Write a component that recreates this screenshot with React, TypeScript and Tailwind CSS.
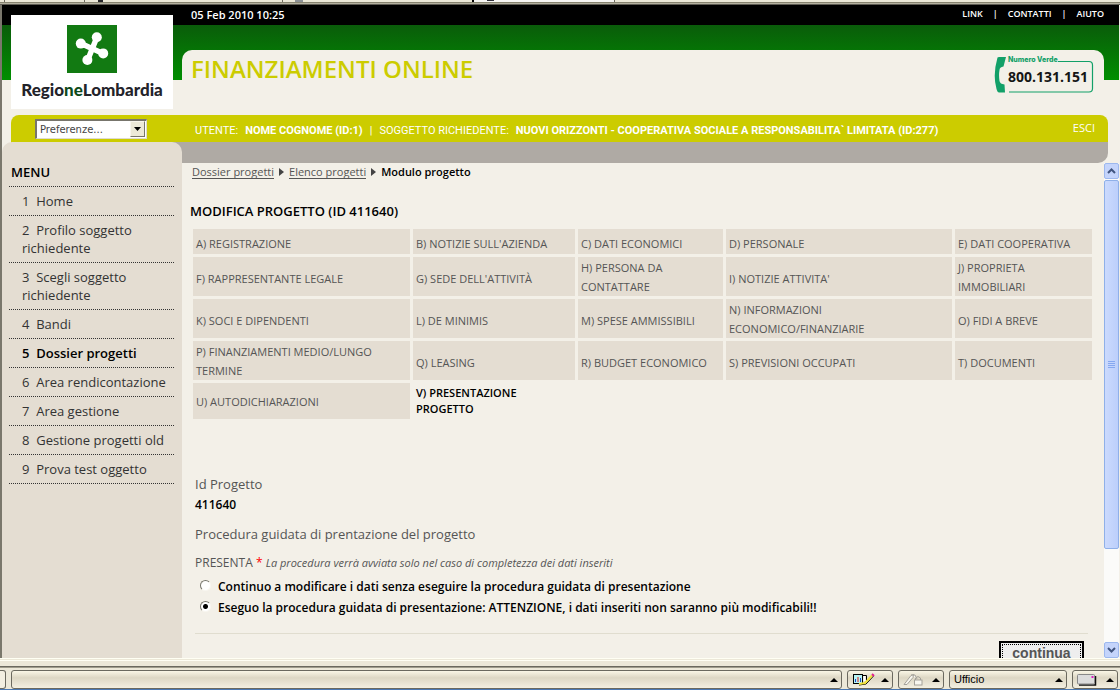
import { useState } from "react";

const menu = [
  "Home",
  "Profilo soggetto richiedente",
  "Scegli soggetto richiedente",
  "Bandi",
  "Dossier progetti",
  "Area rendicontazione",
  "Area gestione",
  "Gestione progetti old",
  "Prova test oggetto",
];

const sections: { height: string; cells: string[] }[] = [
  {
    height: "h-[25px]",
    cells: ["A) REGISTRAZIONE", "B) NOTIZIE SULL'AZIENDA", "C) DATI ECONOMICI", "D) PERSONALE", "E) DATI COOPERATIVA"],
  },
  {
    height: "h-[39px]",
    cells: [
      "F) RAPPRESENTANTE LEGALE",
      "G) SEDE DELL'ATTIVITÀ",
      "H) PERSONA DA\nCONTATTARE",
      "I) NOTIZIE ATTIVITA'",
      "J) PROPRIETA\nIMMOBILIARI",
    ],
  },
  {
    height: "h-[39px]",
    cells: [
      "K) SOCI E DIPENDENTI",
      "L) DE MINIMIS",
      "M) SPESE AMMISSIBILI",
      "N) INFORMAZIONI\nECONOMICO/FINANZIARIE",
      "O) FIDI A BREVE",
    ],
  },
  {
    height: "h-[39px]",
    cells: [
      "P) FINANZIAMENTI MEDIO/LUNGO\nTERMINE",
      "Q) LEASING",
      "R) BUDGET ECONOMICO",
      "S) PREVISIONI OCCUPATI",
      "T) DOCUMENTI",
    ],
  },
];

const choices = [
  "Continuo a modificare i dati senza eseguire la procedura guidata di presentazione",
  "Eseguo la procedura guidata di presentazione: ATTENZIONE, i dati inseriti non saranno più modificabili!!",
];

function TabStrip() {
  return (
    <div className="flex h-[2px] shrink-0 bg-[#ece9d8]">
      <div className="w-[5px] border-r border-[#6f6c60]" />
      <div className="w-[80px] border-r border-[#6f6c60]" />
      <div className="ml-[13px] w-[5px] bg-[#26262a]" />
      <div className="w-[180px] border-r border-[#6f6c60]" />
      <div className="ml-[12px] w-[8px] bg-[#8d9296]" />
      <div className="w-[171px] border-r-2 border-black" />
      <div className="w-[141px] border-r border-[#6f6c60] bg-[#f8f7f4] pl-[13px]">
        <div className="h-px w-[7px] bg-[#30303a]" />
      </div>
    </div>
  );
}

function RegionLogo() {
  return (
    <div className="flex h-[94px] w-[162px] flex-col items-center bg-white pt-[10px]">
      <svg width="50" height="48" viewBox="0 0 50 48" aria-hidden="true">
        <rect width="50" height="48" fill="#127a12" />
        <g stroke="#fff" strokeWidth="5.5" strokeLinecap="round">
          <path d="M14 18.5 L36 28.5" />
          <path d="M30 12 L20.5 35.5" />
        </g>
        <g fill="#fff">
          <circle cx="13.8" cy="18.6" r="5" />
          <circle cx="29.8" cy="12.2" r="5" />
          <circle cx="36.2" cy="28.4" r="5" />
          <circle cx="20.4" cy="35" r="5" />
        </g>
      </svg>
      <div className="mt-[6px] font-['Lato',sans-serif] text-[17px] leading-[22px] font-black text-[#23232a]">
        Regio<span className="text-[#0d4a1a]">ne</span>Lombardia
      </div>
    </div>
  );
}

function TollFree() {
  return (
    <svg width="100" height="42" viewBox="0 0 100 42" role="img" aria-label="Numero Verde 800.131.151">
      <path d="M64 6.500 H95 Q98.500 6.500 98.500 10 V33.500 Q98.500 37 95 37 H15" fill="none" stroke="#12a068" strokeWidth="1.2" />
      <path
        d="M3.500 2.500 Q4 2 5 2 H12 L9.500 11.500 Q5.500 12 5.500 15 Q4.600 20 5.500 26 Q6 29 10.500 29.500 L11 37.500 H5 Q3.500 37.500 2.500 34 Q-1.500 20 3.500 2.500 Z"
        fill="#12a068"
      />
      <text x="14" y="7" fontFamily="Inter, sans-serif" fontSize="7" fontWeight="800" fill="#12a068">
        Numero Verde
      </text>
      <text x="14" y="27" fontFamily="'Open Sans', sans-serif" fontSize="14" fontWeight="700" fill="#151515">
        800.131.151
      </text>
    </svg>
  );
}

function Header() {
  return (
    <header className="flex h-[110px] shrink-0 bg-[linear-gradient(to_bottom,#000_20px,#0a5c0a_20px,#008f00_75px,#f3f0e8_75px)]">
      <div className="w-[180px] shrink-0 pt-[10px] pl-[9px]">
        <RegionLogo />
      </div>
      <div className="flex min-w-0 flex-1 flex-col">
        <div className="flex h-[20px] items-center justify-between pr-[15px] pl-[9px] font-semibold text-white">
          <time className="text-[11px]">05 Feb 2010 10:25</time>
          <nav className="flex items-center gap-[10px] pb-[3px] text-[9px]">
            <a href="#link">LINK</a>
            <span>|</span>
            <a href="#contatti">CONTATTI</a>
            <span>|</span>
            <a href="#aiuto">AIUTO</a>
          </nav>
        </div>
        <div className="mt-[25px] mr-[15px] flex flex-1 items-start justify-between rounded-t-[10px] bg-[#f3f0e8] pt-[5px] pr-[10px] pl-[9px]">
          <h1 className="text-[24px] leading-[28px] font-semibold text-[#cccc00]">FINANZIAMENTI ONLINE</h1>
          <TollFree />
        </div>
      </div>
    </header>
  );
}

function UserBar() {
  return (
    <div className="mr-[11px] ml-[9px] flex h-[27px] shrink-0 items-center rounded-t-[8px] bg-[#cccc00] pr-[13px] text-[11px] text-white">
      <div className="w-[184px] shrink-0 pl-[24px]">
        <div className="relative w-[112px]">
          <select
            aria-label="Preferenze"
            className="block h-[20px] w-full appearance-none border border-t-2 border-l-2 border-[#dedbd0] border-t-[#77756c] border-l-[#77756c] bg-white pl-[3px] font-['DejaVu_Sans',sans-serif] text-[10px] text-[#444]"
          >
            <option>Preferenze...</option>
          </select>
          <span className="pointer-events-none absolute top-[2px] right-[2px] flex h-[16px] w-[15px] items-center justify-center border border-[#f8f6ee] border-r-[#77756c] border-b-[#77756c] bg-[#ece9d8]">
            <svg width="7" height="4" viewBox="0 0 7 4" aria-hidden="true">
              <path d="M0 0 H7 L3.500 4 Z" fill="#000" />
            </svg>
          </span>
        </div>
      </div>
      <p className="flex min-w-0 flex-1 gap-[7px] pt-[5px] font-['Roboto',sans-serif] whitespace-nowrap">
        <span>UTENTE:</span>
        <b className="font-bold">NOME COGNOME (ID:1)</b>
        <span>|</span>
        <span>SOGGETTO RICHIEDENTE:</span>
        <b className="font-bold">NUOVI ORIZZONTI - COOPERATIVA SOCIALE A RESPONSABILITA` LIMITATA (ID:277)</b>
      </p>
      <a href="#esci">ESCI</a>
    </div>
  );
}

function Sidebar() {
  return (
    <div className="flex w-[180px] shrink-0 bg-[linear-gradient(to_right,#f3f0e8_9px,#cccc00_9px,#cccc00_50%,#afaaa4_50%)]">
      <nav className="flex-1 rounded-t-[10px] bg-[#e4ddd2] pt-[21px] pr-[8px] pl-[7px]">
        <h2 className="border-b border-dotted border-[#333] pb-[5px] pl-[2px] text-[13px] leading-[18px] font-semibold text-black">MENU</h2>
        <ul>
          {menu.map((label, i) => (
            <li key={label} className="border-b border-dotted border-[#333] py-[5px] pl-[13px] text-[13px] leading-[18px]">
              <a href={`#menu-${i + 1}`} className={i === 4 ? "block font-semibold text-black" : "block text-[#333]"}>
                {`${i + 1}\u00a0\u00a0${label}`}
              </a>
            </li>
          ))}
        </ul>
      </nav>
    </div>
  );
}

function Crumb() {
  return (
    <svg width="5" height="8" viewBox="0 0 5 8" aria-hidden="true">
      <path d="M0 0 L5 4 L0 8 Z" fill="#444" />
    </svg>
  );
}

function SectionTable() {
  const cell = "bg-[#e4ddd2] p-0 px-[3px] align-middle leading-[19px] whitespace-pre-line";
  return (
    <table className="mt-[6px] w-full table-fixed border-separate border-spacing-[3px] text-[11px] text-[#555]">
      <colgroup>
        <col className="w-[217px]" />
        <col className="w-[162px]" />
        <col className="w-[145px]" />
        <col className="w-[226px]" />
        <col className="w-[137px]" />
      </colgroup>
      <tbody>
        {sections.map((row) => (
          <tr key={row.cells[0]} className={row.height}>
            {row.cells.map((text) => (
              <td key={text} className={text.includes("\n") ? cell : `${cell} pt-[3px]`}>
                <a href="#sezione">{text}</a>
              </td>
            ))}
          </tr>
        ))}
        <tr className="h-[36px]">
          <td className={cell}>
            <a href="#sezione">U) AUTODICHIARAZIONI</a>
          </td>
          <td className="p-0 px-[3px] align-middle leading-[16px] font-semibold whitespace-pre-line text-black">
            {"V) PRESENTAZIONE\nPROGETTO"}
          </td>
        </tr>
      </tbody>
    </table>
  );
}

function ProjectForm() {
  const [choice, setChoice] = useState(1);
  return (
    <form className="mt-[52px] mr-[7px] ml-[5px] text-[13px] leading-[20px] text-[#555]">
      <p>Id Progetto</p>
      <p className="mt-px text-[12px] font-semibold text-black">411640</p>
      <p className="mt-[9px]">Procedura guidata di prentazione del progetto</p>
      <fieldset className="mt-[9px]">
        <legend className="text-[12px]">
          PRESENTA <span className="text-[#f00]">*</span> <i className="text-[11px]">La procedura verrà avviata solo nel caso di completezza dei dati inseriti</i>
        </legend>
        <div className="flex flex-col gap-px pt-[4px]">
          {choices.map((text, i) => (
            <label key={text} className="flex pl-[5px] text-[12px] font-semibold text-black">
              <input
                type="radio"
                name="presenta"
                checked={choice === i}
                onChange={() => setChoice(i)}
                className="mt-[3px] mr-[7px] size-[11px] shrink-0 appearance-none rounded-full border border-[#f8f6f0] border-t-[#77756c] border-l-[#77756c] bg-white checked:bg-[radial-gradient(circle,#000_2px,#fff_3px)]"
              />
              {text}
            </label>
          ))}
        </div>
      </fieldset>
      <div className="mt-[15px] flex justify-end border-t border-[#e0ddcf] pt-[7px] pr-[4px]">
        <button type="button" className="h-[24px] w-[85px] shrink-0 border-2 border-black bg-[#eee] p-px font-['Liberation_Sans',sans-serif] text-[14px] leading-[16px] font-bold text-[#555]">
          <span className="flex h-full items-center justify-center border border-dotted border-black">continua</span>
        </button>
      </div>
    </form>
  );
}

function ScrollBar() {
  const key = "flex h-[16px] w-full shrink-0 items-center justify-center rounded-[2px] border border-[#9db8ee] bg-[#c4d4fb]";
  return (
    <div className="flex w-[15px] shrink-0 flex-col bg-[#fbfbf9]">
      <button type="button" aria-label="Scorri su" className={key}>
        <svg width="9" height="6" viewBox="0 0 9 6" aria-hidden="true">
          <path d="M1 5 L4.500 1.500 L8 5" fill="none" stroke="#41557f" strokeWidth="2" />
        </svg>
      </button>
      <div className="mt-px flex min-h-0 flex-1 flex-col">
        <div className="flex flex-[369] flex-col items-center justify-center gap-px rounded-[2px] border border-[#8fb0e8] bg-[linear-gradient(to_right,#cbdafd,#bccffb)]">
          <span className="h-px w-[7px] bg-[#86a8f0]" />
          <span className="h-px w-[7px] bg-[#86a8f0]" />
          <span className="h-px w-[7px] bg-[#86a8f0]" />
          <span className="h-px w-[7px] bg-[#86a8f0]" />
        </div>
        <div className="flex-[93]" />
      </div>
      <button type="button" aria-label="Scorri giù" className={key}>
        <svg width="9" height="6" viewBox="0 0 9 6" aria-hidden="true">
          <path d="M1 1 L4.500 4.500 L8 1" fill="none" stroke="#41557f" strokeWidth="2" />
        </svg>
      </button>
    </div>
  );
}

function UpMark() {
  return (
    <svg width="8" height="4" viewBox="0 0 8 4" className="ml-auto shrink-0" aria-hidden="true">
      <path d="M0 4 H8 L4 0 Z" fill="#000" />
    </svg>
  );
}

function StatusBar() {
  const key =
    "flex h-[19px] items-center rounded-[3px] border border-[#6b695f] bg-[linear-gradient(to_bottom,#faf6e6,#ddd7c4_40%,#f3efe1)] pr-[3px] pl-[4px] text-black";
  return (
    <footer className="flex h-[32px] shrink-0 flex-col border-b border-[#4a78b4] bg-[#ece8d8]">
      <div className="h-[3px] shrink-0 border-t border-b border-[#fffff4]" />
      <div className="mt-[5px] h-[2px] shrink-0 border-t border-[#6b695f] bg-[#a09d8c]" />
      <div className="flex items-center gap-[5px] pt-[2px] pr-[2px]">
        <div className="h-[19px] w-[6px] rounded-r-[3px] border border-l-0 border-[#6b695f] bg-[#f3efe1]" />
        <button type="button" aria-label="Stato" className={`${key} min-w-0 flex-1`}>
          <UpMark />
        </button>
        <button type="button" aria-label="Modifica" className={`${key} w-[46px]`}>
          <svg width="24" height="13" viewBox="0 0 24 13" aria-hidden="true">
            <rect x="1.500" y="1.500" width="9" height="9" fill="#b8f4f4" stroke="#000" />
            <path d="M3.500 9 V6 M8.500 9 V5" stroke="#1648c8" />
            <path d="M6 9 V4" stroke="#e01818" />
            <path d="M10.500 2.500 H14.500 V9" fill="none" stroke="#000" />
            <path d="M7 12 L14 11 L21.500 3" fill="none" stroke="#000" />
            <path d="M7 11 L13 10 L20 2.500" fill="none" stroke="#f0e23c" strokeWidth="2" />
            <path d="M12.500 3 V8" stroke="#fff" strokeWidth="2" />
            <path d="M20 1 L22 3" stroke="#e0208c" strokeWidth="2" />
          </svg>
          <UpMark />
        </button>
        <button type="button" aria-label="Protezione" className={`${key} w-[46px]`}>
          <svg width="20" height="13" viewBox="0 0 20 13" fill="#f8f6ee" stroke="#a5a29a" aria-hidden="true">
            <path d="M1 11.500 L8 2.500 L10.500 1.500 L10 4.500 L4 11.500 Z M8 2 H12 L14 6" />
            <path d="M12.500 7 V5 Q15 2 17.500 5 V7" fill="none" />
            <rect x="11.500" y="7" width="7.500" height="5" />
          </svg>
          <UpMark />
        </button>
        <button type="button" className={`${key} w-[118px] font-['Liberation_Sans',sans-serif] text-[11px]`}>
          Ufficio
          <UpMark />
        </button>
        <button type="button" aria-label="Messaggi" className={`${key} w-[46px]`}>
          <svg width="20" height="12" viewBox="0 0 20 12" aria-hidden="true">
            <path d="M18.500 2 V11 H2" fill="none" stroke="#111" strokeWidth="1.5" />
            <rect x="0.500" y="0.500" width="17" height="9.500" rx="1" fill="#dcdcdc" stroke="#888" />
            <rect x="14.500" y="2" width="2" height="2" fill="#e020c0" />
          </svg>
          <UpMark />
        </button>
      </div>
    </footer>
  );
}

export default function App() {
  return (
    <div className="flex h-screen flex-col overflow-hidden bg-[#f3f0e8] font-['Open_Sans',sans-serif]">
      <TabStrip />
      <div className="h-[3px] shrink-0 border-t border-b border-t-[#86836f] border-b-[#5f5d54] bg-[#b4b1a0]" />
      <div className="flex min-h-0 flex-1 flex-col border-r border-l-2 border-r-[#f3f0e8] border-l-[#7a776c]">
        <Header />
        <UserBar />
        <div className="flex min-h-0 flex-1">
          <Sidebar />
          <div className="flex min-w-0 flex-1 flex-col">
            <div className="mr-[11px] h-[21px] shrink-0 rounded-br-[10px] bg-[#afaaa4]" />
            <div className="flex min-h-0 flex-1">
              <main className="min-w-0 flex-1 overflow-hidden pr-[9px] pl-[8px]">
                <nav className="flex h-[18px] items-center gap-[5px] pl-[2px] text-[11px] text-[#555]">
                  <a href="#dossier" className="border-b border-[#555] leading-[13px]">Dossier progetti</a>
                  <Crumb />
                  <a href="#elenco" className="border-b border-[#555] leading-[13px]">Elenco progetti</a>
                  <Crumb />
                  <span className="font-semibold text-black">Modulo progetto</span>
                </nav>
                <h2 className="mt-[21px] text-[13px] leading-[18px] font-semibold text-black">MODIFICA PROGETTO (ID 411640)</h2>
                <SectionTable />
                <ProjectForm />
              </main>
              <ScrollBar />
            </div>
          </div>
        </div>
      </div>
      <StatusBar />
    </div>
  );
}
